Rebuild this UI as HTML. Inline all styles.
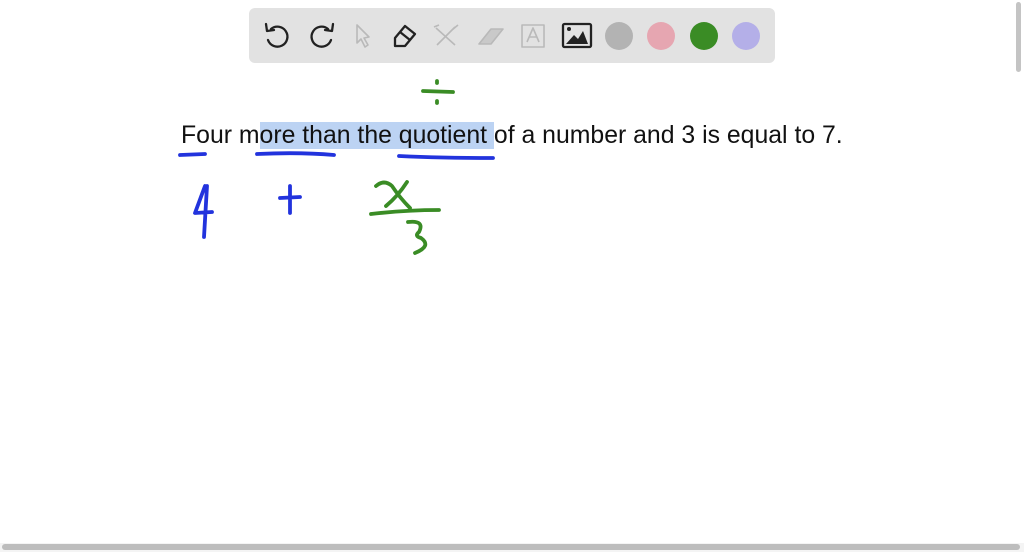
<!DOCTYPE html>
<html><head><meta charset="utf-8"><style>
body{margin:0;width:1024px;height:552px;background:#fff;position:relative;overflow:hidden;font-family:"Liberation Sans",Arial,sans-serif}
.tb{position:absolute;left:249px;top:8px;width:526px;height:55px;background:#e2e2e2;border-radius:6px}
.c{position:absolute;top:22px;width:28px;height:28px;border-radius:50%}
.txt{position:absolute;left:181px;top:121px;font-size:24.8px;color:#111;white-space:nowrap;line-height:30px}
.hl{background:#bcd3f3}
</style></head><body>
<div class="tb"></div>
<svg width="1024" height="552" style="position:absolute;left:0;top:0">
<g fill="none" stroke="#222" stroke-width="2.3" stroke-linecap="round" stroke-linejoin="round">
<path d="M271 29 A10 10 0 1 1 268 40"/><path d="M266 24 L267 31 L274 30"/>
<path d="M328 29 A10 10 0 1 0 331 40"/><path d="M333 24 L332 31 L325 30"/>
<path d="M395 38 L405 26 L415 34 L405 46 L395 46 Z M400 32 L410 40"/>
<rect x="563" y="24" width="28" height="23" rx="1.5"/>
</g>
<path d="M566 44 L574 35 L578 39 L583 31 L588 44 Z" fill="#222"/><circle cx="569" cy="29" r="2" fill="#222"/>
<g fill="none" stroke="#b9b9b9" stroke-width="1.6" stroke-linejoin="round">
<path d="M357 25 L357 43 L361 39 L365 47 L368 45 L364 38 L369 37 Z"/>
<path d="M436 28 L455 45 M455 27 L437 45 M434 27 L439 25 M452 30 L458 25"/>
<path d="M479 44 L491 29 L503 29 L491 44 Z" fill="#c9c9c9"/>
<rect x="522" y="25" width="22" height="22"/><path d="M527 42 L533 28 L539 42 M529 37 L537 37"/>
</g>
</svg>
<div class="c" style="left:605px;background:#b3b3b3"></div>
<div class="c" style="left:647px;background:#e6a6b1"></div>
<div class="c" style="left:690px;background:#3a8c25"></div>
<div class="c" style="left:732px;background:#b4afe8"></div>
<div class="txt">Four m<span class="hl">ore than the quotient </span>of a number and 3 is equal to 7.</div>
<svg width="1024" height="552" style="position:absolute;left:0;top:0" fill="none" stroke-linecap="round" stroke-linejoin="round">
<g stroke="#2233dd" stroke-width="3.8">
<path d="M180 155 L205 154"/><path d="M257 154 Q300 152 334 155"/><path d="M399 156 Q440 158 493 158"/>
<path d="M205 186 L195 213 L212 212 M207 186 L204 237"/>
<path d="M280 198 L300 197 M290 186 L290 213"/>
</g>
<g stroke="#3a8c25" stroke-width="3.8">
<path d="M423 91 L453 92"/><path d="M437 81 L437 83 M437 101 L437 103"/>
<path d="M376 186 Q384 179 392 186 Q400 198 410 208 M407 182 Q398 196 386 206"/>
<path d="M371 214 Q405 210 439 210"/>
<path d="M408 222 Q425 220 419 232 Q414 236 421 238 Q432 246 415 253"/>
</g>
</svg>
<div style="position:absolute;left:1016px;top:2px;width:5px;height:70px;background:#c4c4c4;border-radius:3px"></div>
<div style="position:absolute;left:0;top:543px;width:1024px;height:9px;background:#f4f4f4"></div>
<div style="position:absolute;left:2px;top:544px;width:1018px;height:6px;background:#bdbdbd;border-radius:3px"></div>
</body></html>
